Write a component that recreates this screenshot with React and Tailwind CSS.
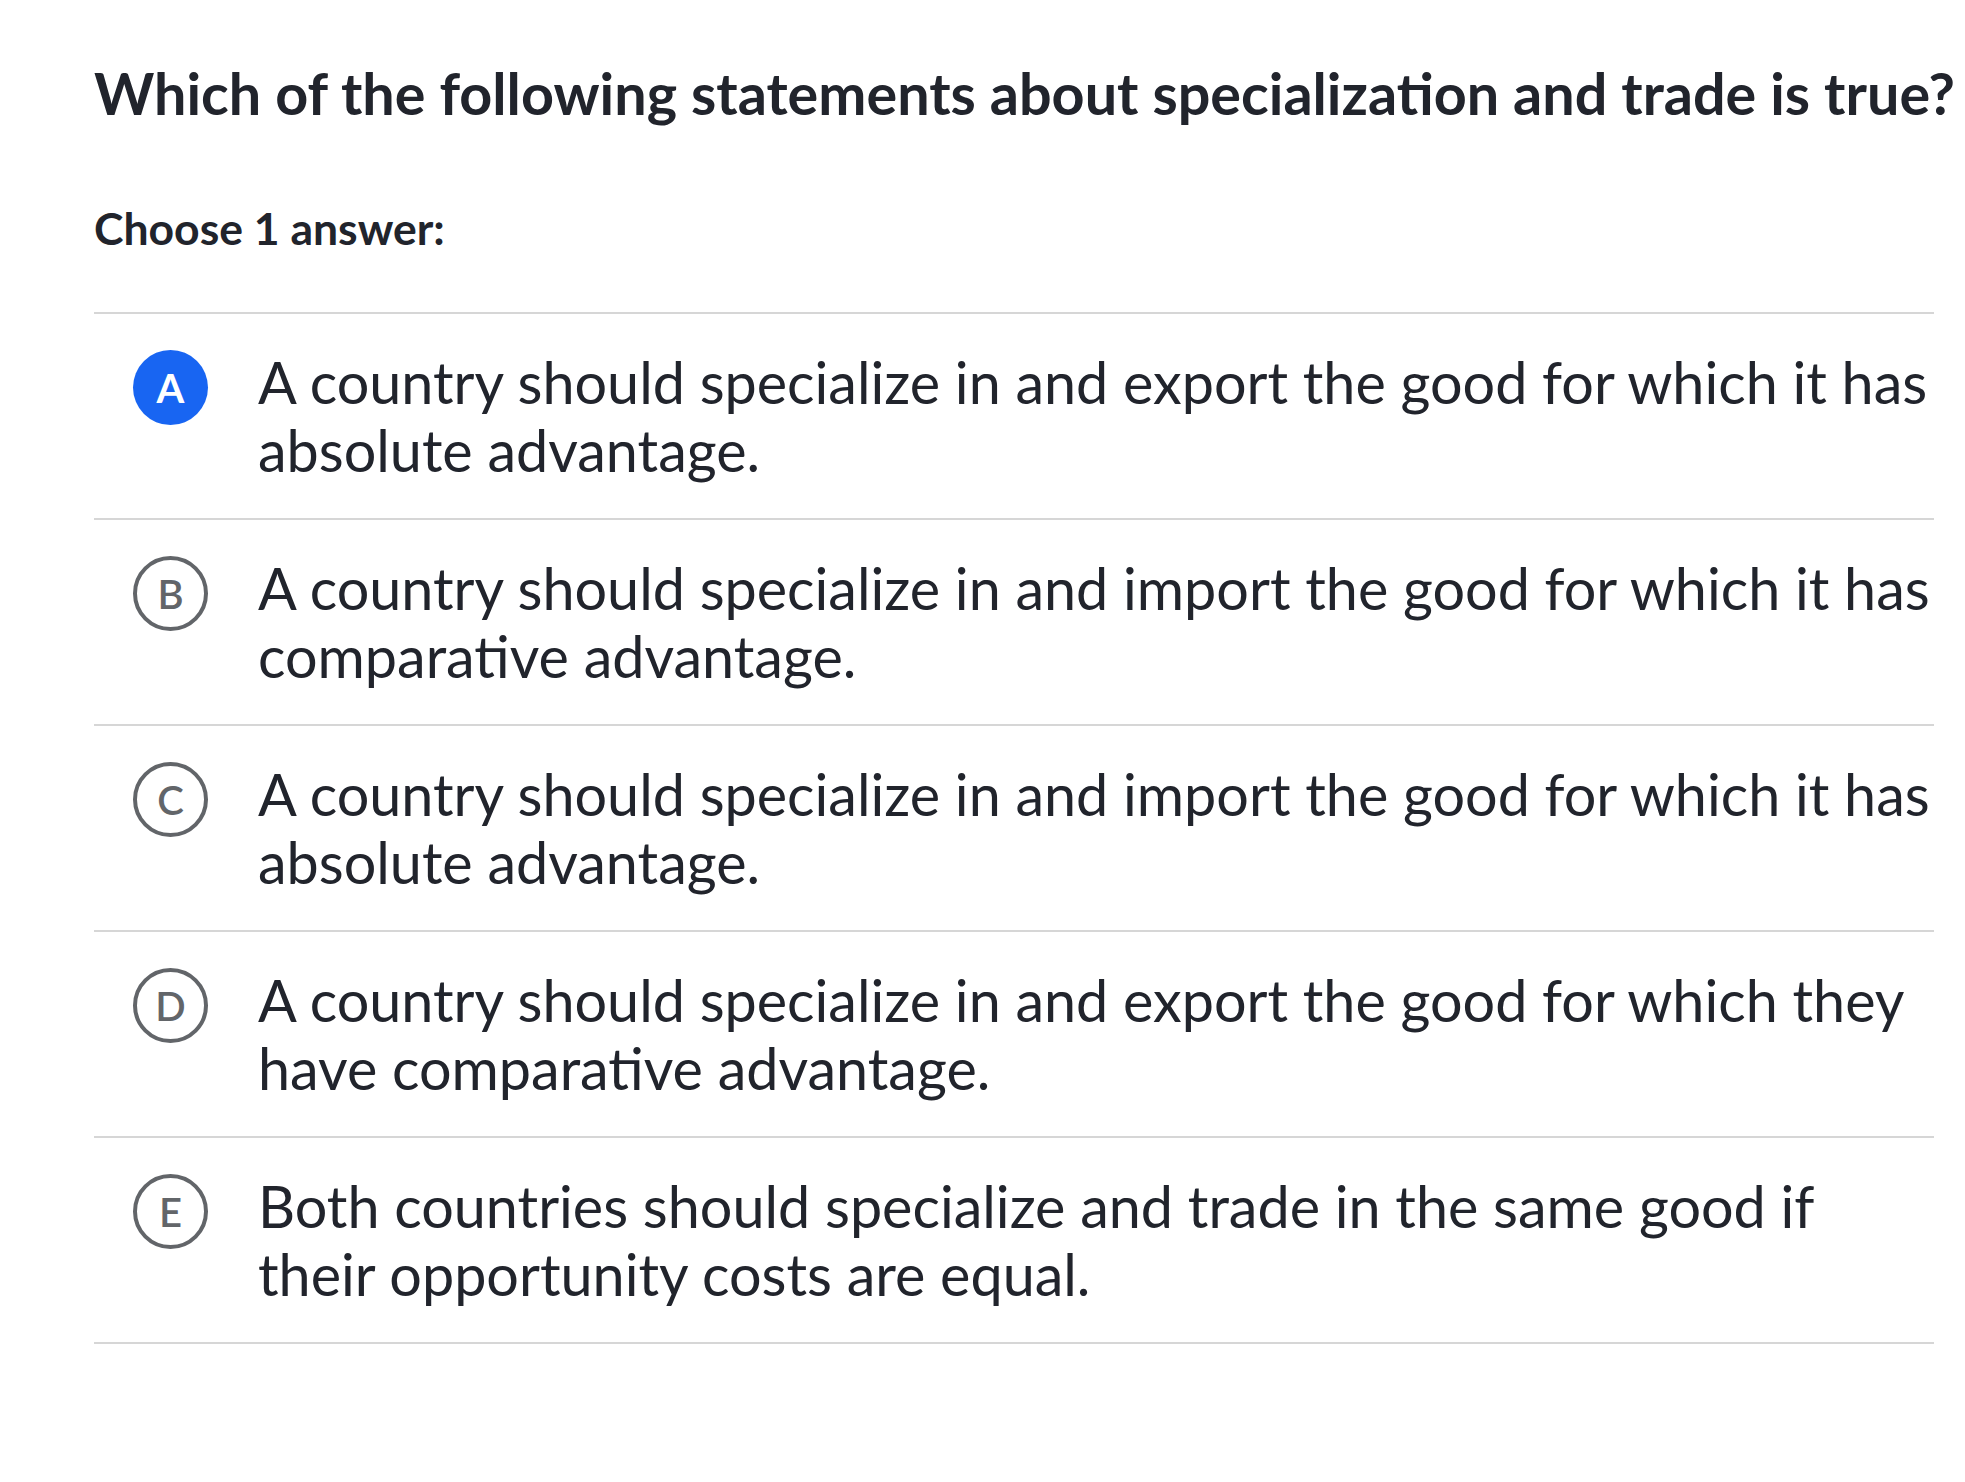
const CHOICES = [
  { letter: 'A', text: 'A country should specialize in and export the good for which it has absolute advantage.', selected: true },
  { letter: 'B', text: 'A country should specialize in and import the good for which it has comparative advantage.' },
  { letter: 'C', text: 'A country should specialize in and import the good for which it has absolute advantage.' },
  { letter: 'D', text: 'A country should specialize in and export the good for which they have comparative advantage.' },
  { letter: 'E', text: 'Both countries should specialize and trade in the same good if their opportunity costs are equal.' },
]

export default function App() {
  return (
    <div className="min-h-screen bg-white text-[#21242c] font-['Lato',_'Noto_Sans',_sans-serif]">
      <div className="w-[1840px] ml-[94px] pt-[58px]">
        <h1 className="text-[57.5px] leading-[1.2] font-bold whitespace-nowrap">
          Which of the following statements about specialization and trade is true?
        </h1>
        <p className="mt-[74px] text-[44.5px] leading-[1.2] font-bold">Choose 1 answer:</p>

        <ul className="mt-[58px] border-t-2 border-[#d6d6d6]">
          {CHOICES.map(c => (
            <li key={c.letter} className="flex items-start gap-[50px] pl-[39px] py-[34px] border-b-2 border-[#d6d6d6]">
              {c.selected ? (
                <div className="mt-[2px] w-[75px] h-[75px] shrink-0 rounded-full bg-[#1865f2] flex items-center justify-center">
                  <span className="text-white text-[40px] font-bold leading-none">{c.letter}</span>
                </div>
              ) : (
                <div className="mt-[2px] w-[75px] h-[75px] shrink-0 rounded-full border-[4px] border-[#626569] flex items-center justify-center">
                  <span className="text-[#626569] text-[40px] font-semibold leading-none">{c.letter}</span>
                </div>
              )}
              <p className="flex-1 text-[57.5px] leading-[68px]">{c.text}</p>
            </li>
          ))}
        </ul>
      </div>
    </div>
  )
}
